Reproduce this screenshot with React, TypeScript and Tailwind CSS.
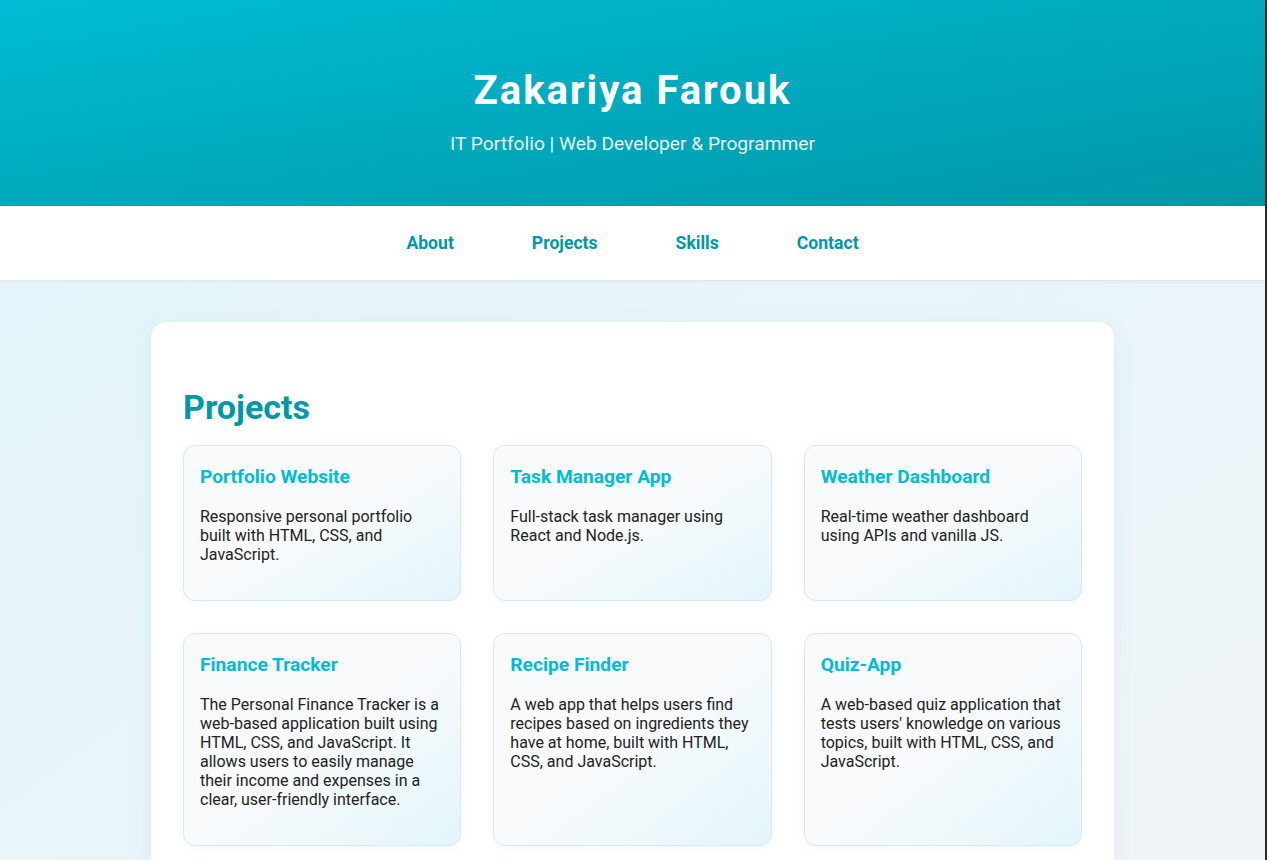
import React from "react"

interface Project {
  title: string
  description: string
}

const projects: Project[] = [
  {
    title: "Portfolio Website",
    description: "Responsive personal portfolio built with HTML, CSS, and JavaScript.",
  },
  {
    title: "Task Manager App",
    description: "Full-stack task manager using React and Node.js.",
  },
  {
    title: "Weather Dashboard",
    description: "Real-time weather dashboard using APIs and vanilla JS.",
  },
  {
    title: "Finance Tracker",
    description:
      "The Personal Finance Tracker is a web-based application built using HTML, CSS, and JavaScript. It allows users to easily manage their income and expenses in a clear, user-friendly interface.",
  },
  {
    title: "Recipe Finder",
    description:
      "A web app that helps users find recipes based on ingredients they have at home, built with HTML, CSS, and JavaScript.",
  },
  {
    title: "Quiz-App",
    description:
      "A web-based quiz application that tests users' knowledge on various topics, built with HTML, CSS, and JavaScript.",
  },
]

const navLinks = ["About", "Projects", "Skills", "Contact"]

function ProjectCard({ title, description }: Project) {
  return (
    <div className="rounded-xl border border-[#dde7f0] bg-gradient-to-br from-[#f8fafc] from-50% to-[#e2f6fb] px-4 pt-5 pb-5 shadow-[0_2px_8px_rgba(0,151,167,0.06)]">
      <h3 className="mb-[19px] text-[19.2px] font-bold leading-[22px] text-[#00bcd4]">{title}</h3>
      <p className="mb-4 text-[16px] leading-[19px] text-[#222222]">{description}</p>
    </div>
  )
}

export default function App() {
  return (
    <div className="flex min-h-screen font-['Roboto',sans-serif]">
      <div className="flex-1 bg-gradient-to-br from-[#e0f5fa] to-[#f0f4f8]">
        <header className="bg-gradient-to-br from-[#00bcd4] to-[#0097a7] pt-[67px] pb-[51px] text-center text-white">
          <h1 className="mb-[19px] text-[40px] font-bold leading-[47px] tracking-[2px]">
            Zakariya Farouk
          </h1>
          <p className="text-[19.2px] leading-[22px] text-white/90">
            IT Portfolio | Web Developer &amp; Programmer
          </p>
        </header>

        <nav className="flex h-[75px] items-center justify-center gap-[78px] border-b border-[#e2e8ee] bg-white shadow-[0_1px_4px_rgba(0,0,0,0.04)]">
          {navLinks.map((link) => (
            <a key={link} href="#" className="text-[17.6px] font-bold text-[#0097a7]">
              {link}
            </a>
          ))}
        </nav>

        <main className="mx-auto mt-[41px] w-[963px] rounded-2xl bg-white px-8 pt-[65px] pb-8 shadow-[0_4px_20px_rgba(0,151,167,0.08)]">
          <h2 className="mb-[18px] text-[34px] font-bold leading-[40px] text-[#0097a7]">Projects</h2>
          <div className="grid grid-cols-3 gap-8">
            {projects.map((project) => (
              <ProjectCard key={project.title} {...project} />
            ))}
          </div>
        </main>
      </div>
      <div className="w-[2px] bg-[#2b2b2b]" />
    </div>
  )
}
